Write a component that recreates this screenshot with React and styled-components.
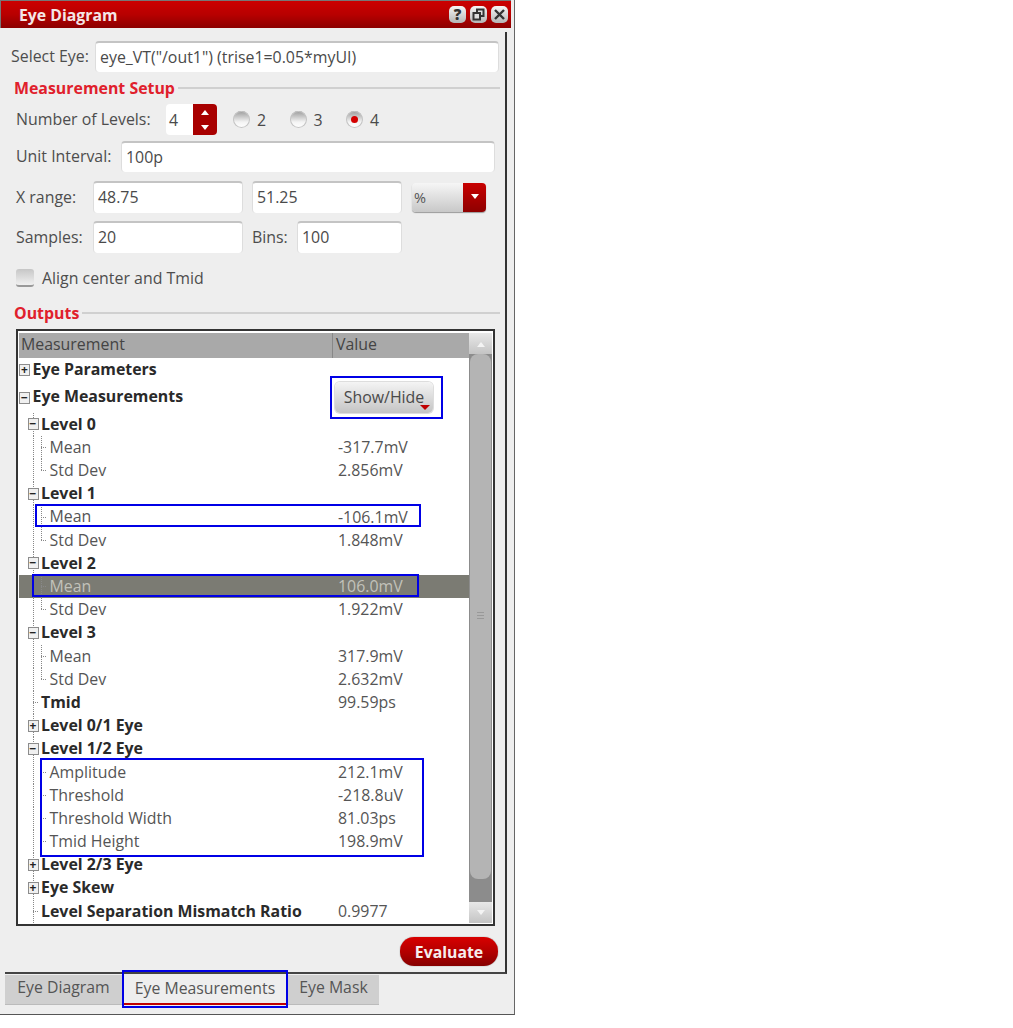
import React from "react";
import styled, { createGlobalStyle } from "styled-components";

const GlobalStyle = createGlobalStyle`
  html, body {
    margin: 0;
    background: #fff;
    font-family: "Open Sans", "Noto Sans", sans-serif;
  }
`;

const Page = styled.div`
  position: relative;
  width: 1013px;
  height: 1028px;
  overflow: hidden;
`;

const Window = styled.div`
  width: 515px;
  height: 1015px;
  box-sizing: border-box;
  background: #eeeeee;
  border-right: 1px solid #666;
  border-bottom: 1px solid #555;
  display: flex;
  flex-direction: column;
`;

const TitleBar = styled.div`
  width: 511px;
  height: 28px;
  flex: none;
  box-sizing: border-box;
  display: flex;
  align-items: center;
  justify-content: space-between;
  padding: 0 3px 0 19px;
  background: linear-gradient(#cc0000, #b80000 50%, #8c0000);
  border-top: 1px solid #777;
  border-left: 1px solid #777;
`;

const Title = styled.span`
  font-size: 15.8px;
  font-weight: 700;
  color: #f4e6e6;
  margin-left: -1px;
`;

const WindowButtons = styled.div`
  display: flex;
  gap: 4px;
`;

const WindowButton = styled.div`
  width: 17px;
  height: 17px;
  border-radius: 5px;
  background: linear-gradient(#f6f6f6, #b5b5b5);
  color: #333;
  display: flex;
  align-items: center;
  justify-content: center;
  font-size: 15px;
  font-weight: 800;
  line-height: 1;
`;

const Panel = styled.div`
  width: 502px;
  height: 942px;
  flex: none;
  box-sizing: border-box;
  margin: 4px 0 0 5px;
  border-right: 2px solid #333;
  border-bottom: 2px solid #444;
  display: flex;
  flex-direction: column;
`;

const FieldRow = styled.div`
  display: flex;
  align-items: center;
  flex: none;
  height: ${(p) => p.$h || 31}px;
  margin-top: ${(p) => p.$top}px;
  padding-left: ${(p) => p.$left || 11}px;
`;

const FieldLabel = styled.label`
  flex: none;
  width: ${(p) => p.$w}px;
  font-size: 15.9px;
  line-height: 20px;
  margin-top: -1px;
  color: #4d4d4d;
  white-space: nowrap;
`;

const TextInput = styled.div`
  flex: none;
  width: ${(p) => p.$w}px;
  height: 100%;
  box-sizing: border-box;
  margin-right: ${(p) => p.$gap || 0}px;
  padding: 0 0 2px 4px;
  display: flex;
  align-items: center;
  background: #fff;
  border-top: 2px solid #c4c4c4;
  border-left: 1px solid #ddd;
  border-right: 1px solid #ddd;
  border-radius: 4px;
  font-size: 15.9px;
  color: #4a4a4a;
  white-space: nowrap;
`;

const Heading = styled.div`
  display: flex;
  align-items: center;
  flex: none;
  height: 20px;
  margin: ${(p) => p.$top}px 5px 0 9px;
  font-size: 15.9px;
  font-weight: 700;
  color: #e0202c;

  &::after {
    content: "";
    flex: 1;
    height: 2px;
    margin-left: 3px;
    background: #d0d0d0;
  }
`;

const Spin = styled.div`
  flex: none;
  width: 51px;
  height: 100%;
  display: flex;
  border-radius: 4px;
  overflow: hidden;
  background: #fff;
`;

const SpinValue = styled.div`
  flex: 1;
  padding-left: 3px;
  display: flex;
  align-items: center;
  font-size: 15.9px;
  color: #4a4a4a;
`;

const SpinButtons = styled.div`
  width: 24px;
  background: #a80000;
  display: flex;
  flex-direction: column;
  align-items: center;
  justify-content: center;
  gap: 10px;
`;

const RadioGroup = styled.div`
  display: flex;
  margin-left: 16px;
`;

const RadioItem = styled.div`
  width: 56.5px;
  display: flex;
  align-items: center;
  gap: 7px;
  font-size: 15.9px;
  color: #4a4a4a;
`;

const RadioDot = styled.span`
  flex: none;
  width: 17px;
  height: 17px;
  border-radius: 50%;
  display: flex;
  align-items: center;
  justify-content: center;
  background: linear-gradient(#9a9a9a, #f4f4f4 65%, #fff);
  box-shadow: inset 0 0 0 1px #c4c4c4;

  &::after {
    content: "";
    width: 7px;
    height: 7px;
    border-radius: 50%;
    background: ${(p) => (p.$on ? "#d40000" : "transparent")};
  }
`;

const Combo = styled.div`
  flex: none;
  width: 74px;
  height: 29px;
  display: flex;
  border-radius: 4px;
  overflow: hidden;
  background: linear-gradient(#f6f6f6, #c8c8c8);
  box-shadow: 0 1px 1px #999;
`;

const ComboValue = styled.div`
  flex: 1;
  padding-left: 2px;
  display: flex;
  align-items: center;
  font-size: 14.5px;
  color: #555;
`;

const ComboArrow = styled.div`
  width: 23px;
  display: flex;
  align-items: center;
  justify-content: center;
  background: linear-gradient(#c80000, #8e0000);
`;

const Check = styled.span`
  flex: none;
  width: 18px;
  height: 18px;
  box-sizing: border-box;
  margin-right: 8px;
  border-radius: 3px;
  background: linear-gradient(#c6c6c6, #f0f0f0);
  border-bottom: 2px solid #999;
`;

const Frame = styled.div`
  flex: none;
  width: 479px;
  height: 597px;
  box-sizing: border-box;
  margin: 6px 0 0 11px;
  padding: 2px 1px 1px;
  border: 2px solid #333;
  background: #fff;
  display: grid;
  grid-template-columns: 450px 23px;
`;

const Table = styled.div`
  min-width: 0;
  overflow: hidden;
`;

const HeaderRow = styled.div`
  height: 25px;
  display: grid;
  grid-template-columns: 313px 1fr;
  background: #a9a9a9;
  font-size: 15.9px;
  line-height: 23px;
  color: #444;
`;

const HeaderCell = styled.div`
  padding-left: ${(p) => p.$pad}px;
  border-left: ${(p) => (p.$divider ? "1px solid #888" : "none")};
`;

const Row = styled.div`
  height: ${(p) => (p.$tall ? 31.5 : 23.2)}px;
  display: grid;
  grid-template-columns: 313px 1fr;
  align-items: stretch;
  background: ${(p) => (p.$selected ? "#7b7b73" : "transparent")};
  color: ${(p) => (p.$selected ? "#c2c2ba" : "#555")};
`;

const TreeCell = styled.div`
  display: flex;
  align-items: stretch;
  white-space: nowrap;
`;

const Guide = styled.span`
  flex: none;
  width: 8.5px;
  background-image: ${(p) =>
    p.$on ? "repeating-linear-gradient(to bottom, #888 0 1px, transparent 1px 2px)" : "none"};
  background-size: 1px 100%;
  background-position: 5px 0;
  background-repeat: no-repeat;
`;

const Marker = styled.span`
  flex: none;
  width: 11px;
  display: flex;
  align-items: center;
  justify-content: center;
  background-image: ${(p) =>
      p.$line ? "repeating-linear-gradient(to bottom, #888 0 1px, transparent 1px 2px)" : "none"},
    ${(p) =>
      p.$twig ? "repeating-linear-gradient(to right, #888 0 1px, transparent 1px 2px)" : "none"};
  background-size: 1px ${(p) => (p.$end ? "50%" : "100%")}, 6px 1px;
  background-position: 5px 0, 5px 50%;
  background-repeat: no-repeat;
`;

const Expander = styled.span`
  width: 10px;
  height: 10px;
  border: 1px solid #8c8c8c;
  background: #f0f0f0;
  display: flex;
  align-items: center;
  justify-content: center;

  &::before {
    content: "${(p) => (p.$open ? "−" : "+")}";
    font-size: 12px;
    font-weight: 700;
    line-height: 10px;
    color: #222;
  }
`;

const NodeLabel = styled.span`
  margin-left: 2.5px;
  font-size: 15.9px;
  line-height: ${(p) => (p.$tall ? 30 : 22)}px;
  font-weight: ${(p) => (p.$bold ? 700 : 400)};
  color: ${(p) => (p.$bold ? "#2a2a2a" : "inherit")};
`;

const ValueCell = styled.div`
  padding: 0 0 1px 6px;
  display: flex;
  align-items: center;
  font-size: 15.9px;
`;

const MenuButton = styled.div`
  position: relative;
  width: 98px;
  height: 31px;
  margin: 1px 0 0 -3px;
  border-radius: 5px;
  background: linear-gradient(#f4f4f4, #c4c4c4);
  box-shadow: 0 0 0 1px #ddd;
  display: flex;
  align-items: center;
  justify-content: center;
  padding-bottom: 1px;
  box-sizing: border-box;
  color: #4a4a4a;

  &::after {
    content: "";
    position: absolute;
    right: 3px;
    bottom: 3px;
    border: 5px solid transparent;
    border-bottom-width: 0;
    border-top-color: #c00000;
  }
`;

const ScrollBar = styled.div`
  display: flex;
  flex-direction: column;
  background: #8c8c8c;
`;

const ScrollButton = styled.div`
  height: 21px;
  flex: none;
  background: linear-gradient(#e8e8e8, #c4c4c4);
  display: flex;
  align-items: center;
  justify-content: center;
`;

const ScrollThumb = styled.div`
  flex: none;
  height: 525px;
  margin: 0 1px;
  border-radius: 8px;
  background: #b4b4b4;
  display: flex;
  align-items: center;
  justify-content: center;
`;

const ThumbGrip = styled.span`
  width: 7px;
  height: 9px;
  background: repeating-linear-gradient(to bottom, #999 0 1px, transparent 1px 3px);
`;

const ScrollSpacer = styled.div`
  flex: 1;
`;

const Footer = styled.div`
  display: flex;
  justify-content: flex-end;
  margin: 11px 7px 0 0;
`;

const Evaluate = styled.div`
  width: 98px;
  height: 29px;
  border-radius: 14px;
  background: linear-gradient(#d80000, #b00000 55%, #860000);
  box-shadow: 0 0 1px #555;
  display: flex;
  align-items: center;
  justify-content: center;
  font-size: 15.8px;
  font-weight: 700;
  color: #f6eeee;
`;

const TabBar = styled.div`
  display: flex;
  flex: none;
  height: 30px;
  margin: 1px 0 0 5px;
`;

const Tab = styled.div`
  width: ${(p) => p.$w}px;
  box-sizing: border-box;
  background: ${(p) => (p.$active ? "#eeeeee" : "#cfcfcf")};
  border-bottom: ${(p) => (p.$active ? "2px solid #c00000" : "1px solid #bbb")};
  font-size: 15.8px;
  color: #555;
  text-align: center;
  line-height: ${(p) => (p.$active ? 27 : 25)}px;
`;

const Annotation = styled.div`
  position: absolute;
  box-sizing: border-box;
  left: ${(p) => p.$x}px;
  top: ${(p) => p.$y}px;
  width: ${(p) => p.$w}px;
  height: ${(p) => p.$h}px;
  border: 2px solid #0000e6;
  pointer-events: none;
`;

const Triangle = ({ up, color = "#fff" }) => (
  <svg width="10" height="6" viewBox="0 0 10 6">
    <path d={up ? "M1 6 L5 1 L9 6 Z" : "M1 0 L9 0 L5 5 Z"} fill={color} />
  </svg>
);

// rows of the output tree, top to bottom
const rows = [
  { label: "Eye Parameters", depth: 0, bold: true, closed: true },
  { label: "Eye Measurements", depth: 0, bold: true, open: true, tall: true, button: true },
  { label: "Level 0", depth: 1, bold: true, open: true },
  { label: "Mean", depth: 2, value: "-317.7mV" },
  { label: "Std Dev", depth: 2, value: "2.856mV", end: true },
  { label: "Level 1", depth: 1, bold: true, open: true },
  { label: "Mean", depth: 2, value: "-106.1mV" },
  { label: "Std Dev", depth: 2, value: "1.848mV", end: true },
  { label: "Level 2", depth: 1, bold: true, open: true },
  { label: "Mean", depth: 2, value: "106.0mV", selected: true },
  { label: "Std Dev", depth: 2, value: "1.922mV", end: true },
  { label: "Level 3", depth: 1, bold: true, open: true },
  { label: "Mean", depth: 2, value: "317.9mV" },
  { label: "Std Dev", depth: 2, value: "2.632mV", end: true },
  { label: "Tmid", depth: 1, bold: true, value: "99.59ps" },
  { label: "Level 0/1 Eye", depth: 1, bold: true, closed: true },
  { label: "Level 1/2 Eye", depth: 1, bold: true, open: true },
  { label: "Amplitude", depth: 2, value: "212.1mV" },
  { label: "Threshold", depth: 2, value: "-218.8uV" },
  { label: "Threshold Width", depth: 2, value: "81.03ps" },
  { label: "Tmid Height", depth: 2, value: "198.9mV", end: true },
  { label: "Level 2/3 Eye", depth: 1, bold: true, closed: true },
  { label: "Eye Skew", depth: 1, bold: true, closed: true },
  { label: "Level Separation Mismatch Ratio", depth: 1, bold: true, value: "0.9977" },
];

const TreeRow = ({ row }) => {
  const hasBox = row.open || row.closed;
  return (
    <Row $tall={row.tall} $selected={row.selected}>
      <TreeCell>
        {row.depth > 0 && <Guide />}
        {row.depth > 1 && <Guide $on />}
        <Marker $line={row.depth > 0} $twig={!hasBox} $end={row.end}>
          {hasBox && <Expander $open={row.open} />}
        </Marker>
        <NodeLabel $bold={row.bold} $tall={row.tall}>
          {row.label}
        </NodeLabel>
      </TreeCell>
      <ValueCell>
        {row.button ? <MenuButton>Show/Hide</MenuButton> : row.value}
      </ValueCell>
    </Row>
  );
};

const App = () => {
  return (
    <Page>
      <GlobalStyle />
      <Window>
        <TitleBar>
          <Title>Eye Diagram</Title>
          <WindowButtons>
            <WindowButton>?</WindowButton>
            <WindowButton>
              <svg width="13" height="13" viewBox="0 0 13 13" fill="none" stroke="#333" strokeWidth="2">
                <rect x="5" y="1.5" width="6.5" height="6.5" />
                <rect x="1.5" y="5" width="6.5" height="6.5" fill="#ddd" />
              </svg>
            </WindowButton>
            <WindowButton>
              <svg width="13" height="13" viewBox="0 0 13 13" fill="none" stroke="#333" strokeWidth="2.4">
                <path d="M2 2 L11 11 M11 2 L2 11" />
              </svg>
            </WindowButton>
          </WindowButtons>
        </TitleBar>
        <Panel>
          <FieldRow $top={9} $left={6}>
            <FieldLabel $w={84}>Select Eye:</FieldLabel>
            <TextInput $w={404}>eye_VT("/out1") (trise1=0.05*myUI)</TextInput>
          </FieldRow>
          <Heading $top={6}>Measurement Setup</Heading>
          <FieldRow $top={6}>
            <FieldLabel $w={150}>Number of Levels:</FieldLabel>
            <Spin>
              <SpinValue>4</SpinValue>
              <SpinButtons>
                <Triangle up />
                <Triangle />
              </SpinButtons>
            </Spin>
            <RadioGroup>
              <RadioItem>
                <RadioDot />2
              </RadioItem>
              <RadioItem>
                <RadioDot />3
              </RadioItem>
              <RadioItem>
                <RadioDot $on />4
              </RadioItem>
            </RadioGroup>
          </FieldRow>
          <FieldRow $top={6}>
            <FieldLabel $w={105}>Unit Interval:</FieldLabel>
            <TextInput $w={374}>100p</TextInput>
          </FieldRow>
          <FieldRow $top={9} $h={32}>
            <FieldLabel $w={77}>X range:</FieldLabel>
            <TextInput $w={150} $gap={9}>48.75</TextInput>
            <TextInput $w={150} $gap={10}>51.25</TextInput>
            <Combo>
              <ComboValue>%</ComboValue>
              <ComboArrow>
                <Triangle />
              </ComboArrow>
            </Combo>
          </FieldRow>
          <FieldRow $top={8} $h={32}>
            <FieldLabel $w={77}>Samples:</FieldLabel>
            <TextInput $w={150} $gap={9}>20</TextInput>
            <FieldLabel $w={45}>Bins:</FieldLabel>
            <TextInput $w={105}>100</TextInput>
          </FieldRow>
          <FieldRow $top={15} $h={20}>
            <Check />
            <FieldLabel $w={200}>Align center and Tmid</FieldLabel>
          </FieldRow>
          <Heading $top={15}>Outputs</Heading>
          <Frame>
            <Table>
              <HeaderRow>
                <HeaderCell $pad={2}>Measurement</HeaderCell>
                <HeaderCell $pad={3} $divider>Value</HeaderCell>
              </HeaderRow>
              {rows.map((row, i) => (
                <TreeRow key={i} row={row} />
              ))}
            </Table>
            <ScrollBar>
              <ScrollButton>
                <Triangle up color="#f4f4f4" />
              </ScrollButton>
              <ScrollThumb>
                <ThumbGrip />
              </ScrollThumb>
              <ScrollSpacer />
              <ScrollButton>
                <Triangle color="#f4f4f4" />
              </ScrollButton>
            </ScrollBar>
          </Frame>
          <Footer>
            <Evaluate>Evaluate</Evaluate>
          </Footer>
        </Panel>
        <TabBar>
          <Tab $w={117}>Eye Diagram</Tab>
          <Tab $w={166} $active>Eye Measurements</Tab>
          <Tab $w={91}>Eye Mask</Tab>
        </TabBar>
      </Window>
      <Annotation $x={330} $y={376} $w={113} $h={43} />
      <Annotation $x={35} $y={504} $w={386} $h={23} />
      <Annotation $x={32} $y={574} $w={387} $h={23} />
      <Annotation $x={40} $y={758} $w={384} $h={99} />
      <Annotation $x={122} $y={970} $w={166} $h={38} />
    </Page>
  );
};

export default App;
